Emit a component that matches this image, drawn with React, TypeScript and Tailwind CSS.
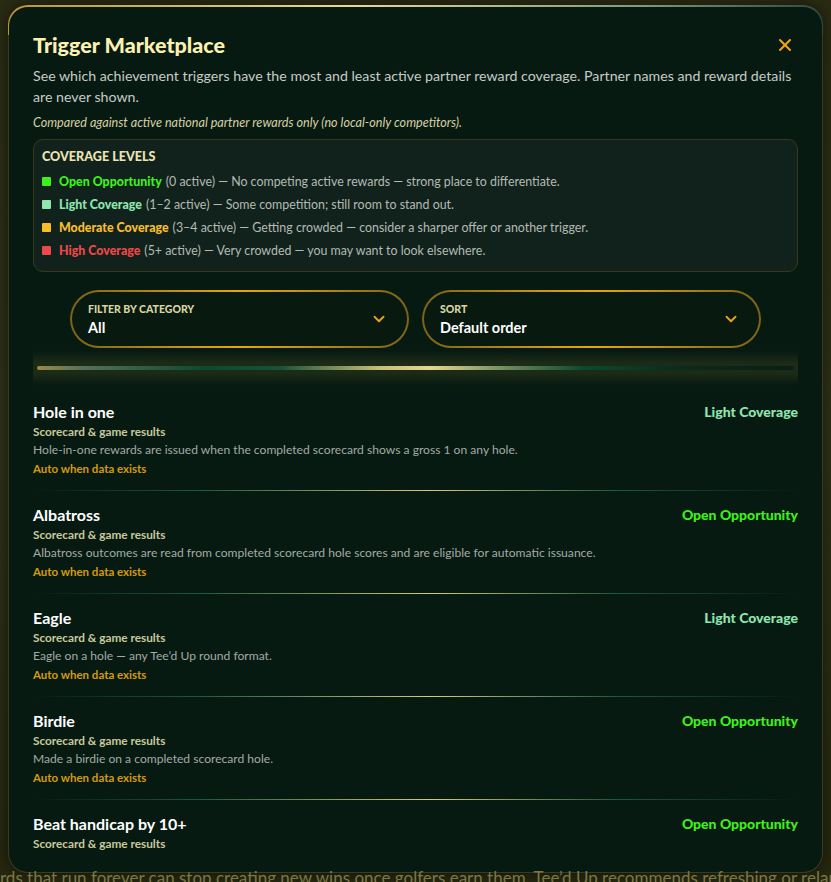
import React from "react";
import { X, ChevronDown } from "lucide-react";

type Level = {
  swatch: string;
  tone: string;
  name: string;
  count: string;
  note: string;
};

const levels: Level[] = [
  {
    swatch: "bg-[#3ef01c]",
    tone: "text-[#3ef01c]",
    name: "Open Opportunity",
    count: "(0 active)",
    note: "No competing active rewards — strong place to differentiate.",
  },
  {
    swatch: "bg-[#8ee6b0]",
    tone: "text-[#8ee6b0]",
    name: "Light Coverage",
    count: "(1–2 active)",
    note: "Some competition; still room to stand out.",
  },
  {
    swatch: "bg-[#f8bd2c]",
    tone: "text-[#f8bd2c]",
    name: "Moderate Coverage",
    count: "(3–4 active)",
    note: "Getting crowded — consider a sharper offer or another trigger.",
  },
  {
    swatch: "bg-[#f04848]",
    tone: "text-[#f04848]",
    name: "High Coverage",
    count: "(5+ active)",
    note: "Very crowded — you may want to look elsewhere.",
  },
];

type Trigger = {
  title: string;
  level: "open" | "light";
  description?: string;
  auto?: boolean;
};

const triggers: Trigger[] = [
  {
    title: "Hole in one",
    level: "light",
    description:
      "Hole-in-one rewards are issued when the completed scorecard shows a gross 1 on any hole.",
    auto: true,
  },
  {
    title: "Albatross",
    level: "open",
    description:
      "Albatross outcomes are read from completed scorecard hole scores and are eligible for automatic issuance.",
    auto: true,
  },
  {
    title: "Eagle",
    level: "light",
    description: "Eagle on a hole — any Tee’d Up round format.",
    auto: true,
  },
  {
    title: "Birdie",
    level: "open",
    description: "Made a birdie on a completed scorecard hole.",
    auto: true,
  },
  {
    title: "Beat handicap by 10+",
    level: "open",
  },
];

const font = { fontFamily: "Lato, 'Noto Sans', sans-serif" };

function Select({ label, value }: { label: string; value: string }) {
  return (
    <div className="rounded-full bg-[linear-gradient(90deg,#7a6218,#c38e12_30%,#eaa40c_50%,#c38e12_70%,#7a6218)] p-[2px]">
      <div className="flex h-[54px] items-center justify-between rounded-full bg-[#08190f] pl-[16px] pr-[19px]">
        <div className="flex flex-col pt-[1px]">
          <span className="text-[10.5px] font-black uppercase leading-[14px] text-[#d8d4a2]">
            {label}
          </span>
          <span className="mt-[2px] text-[14.5px] font-bold leading-[20px] text-white">
            {value}
          </span>
        </div>
        <ChevronDown className="h-[18px] w-[18px] text-[#e8a316]" strokeWidth={2.5} />
      </div>
    </div>
  );
}

function Badge({ level }: { level: Trigger["level"] }) {
  if (level === "light") {
    return (
      <span className="text-[14px] font-black leading-[20px] text-[#8ee6b0]">
        Light Coverage
      </span>
    );
  }
  return (
    <span className="text-[14px] font-black leading-[20px] text-[#3ef01c]">
      Open Opportunity
    </span>
  );
}

function TriggerRow({ item, last }: { item: Trigger; last: boolean }) {
  return (
    <div>
      <div className="pb-[13px] pt-[14px]">
        <div className="flex items-start justify-between">
          <span className="text-[16px] font-bold leading-[20px] text-white">{item.title}</span>
          <Badge level={item.level} />
        </div>
        <div className="mt-[2px] text-[11.8px] font-bold leading-[16px] text-[#c9c99c]">
          Scorecard &amp; game results
        </div>
        {item.description && (
          <div className="mt-[1px] text-[12.1px] leading-[18px] text-[#a3aba5]">
            {item.description}
          </div>
        )}
        {item.auto && (
          <div className="mt-[2px] text-[11.5px] font-bold leading-[16px] text-[#d49a0c]">
            Auto when data exists
          </div>
        )}
      </div>
      {!last && (
        <div className="h-px w-full bg-[linear-gradient(90deg,transparent_0%,#1c5a3e_22%,#d8c97c_52%,#1c5a3e_76%,transparent_100%)]" />
      )}
    </div>
  );
}

export default function App() {
  return (
    <div
      className="flex h-[882px] w-full flex-col overflow-hidden bg-[linear-gradient(180deg,#2a2b13,#30311a_50%,#26270f)]"
      style={font}
    >
      <div className="px-[8px] pt-[5px]">
        {/* dialog frame: warm top rim fading into an olive edge */}
        <div className="rounded-[20px] bg-[linear-gradient(180deg,transparent_30px,#3a3a1c_30px),linear-gradient(90deg,#b8963a,#e4d99c_42%,#7c9a7e_78%,#2d4a3c)] px-px pb-px pt-[2px] shadow-[0_0_14px_rgba(0,0,0,0.55)]">
          <div className="h-[865px] overflow-hidden rounded-[19px] bg-[#071a12] px-[24px] pt-[24px]">
            {/* header */}
            <div className="flex items-center justify-between">
              <h1 className="text-[21.5px] font-black leading-[28px] text-[#fcf1b2]">
                Trigger Marketplace
              </h1>
              <X className="mr-[3px] h-[20px] w-[20px] text-[#eea40a]" strokeWidth={2.5} />
            </div>
            <p className="mt-[6px] text-[14.2px] leading-[21px] text-[#c6ccc6]">
              See which achievement triggers have the most and least active partner reward
              coverage. Partner names and reward details are never shown.
            </p>
            <p className="mt-[8px] text-[12.6px] italic leading-[16px] text-[#d6d0a4]">
              Compared against active national partner rewards only (no local-only competitors).
            </p>

            {/* coverage legend */}
            <div className="mt-[8px] rounded-[10px] border border-[#38391c] bg-[#11221c] px-[8px] pb-[9px] pt-[9px]">
              <div className="text-[12.6px] font-black uppercase leading-[16px] text-[#ece4b6]">
                Coverage levels
              </div>
              <div className="mt-[5px] flex flex-col">
                {levels.map((l) => (
                  <div key={l.name} className="flex items-center text-[12.4px] leading-[23px]">
                    <span className={`mr-[8px] h-[9px] w-[9px] rounded-[1px] ${l.swatch}`} />
                    <span className={`font-black ${l.tone}`}>{l.name}</span>
                    <span className="ml-[4px] text-[#b4bab4]">
                      {l.count} — {l.note}
                    </span>
                  </div>
                ))}
              </div>
            </div>

            {/* filters */}
            <div className="mx-auto mt-[18px] grid max-w-[691px] grid-cols-2 gap-[13px]">
              <Select label="Filter by category" value="All" />
              <Select label="Sort" value="Default order" />
            </div>

            {/* glowing divider */}
            <div className="mt-[3px] flex h-[34px] items-center bg-[linear-gradient(180deg,transparent,rgba(110,112,40,0.2)_35%,rgba(110,112,40,0.2)_65%,transparent)] px-[4px]">
              <div className="h-[4px] w-full rounded-full bg-[linear-gradient(90deg,#9c8a4a,#55705a_6%,#0c4a30_22%,#18503a_32%,#c4bc78_45%,#e4d690_52%,#6e8a60_62%,#0c4a30_72%,#0b2a1e_85%,#0b1e16)]" />
            </div>

            {/* trigger list */}
            <div className="mt-[3px]">
              {triggers.map((t, i) => (
                <TriggerRow key={t.title} item={t} last={i === triggers.length - 1} />
              ))}
            </div>
          </div>
        </div>
      </div>
      <div className="-mt-[6px] whitespace-nowrap text-[17px] leading-[22px] text-[#7a7848]">
        rds that run forever can stop creating new wins once golfers earn them. Tee’d Up
        recommends refreshing or relaunching your rewards regularly.
      </div>
    </div>
  );
}
